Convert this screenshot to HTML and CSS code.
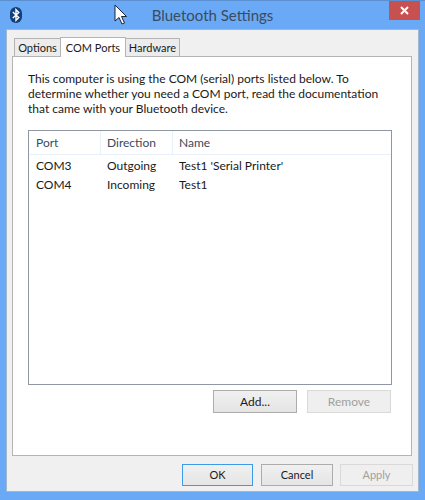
FILE: index.html
```html
<!DOCTYPE html>
<html lang="en">
<head>
  <meta charset="UTF-8">
  <title>Bluetooth Settings</title>
  <link rel="stylesheet" href="styles.css">
</head>
<body>
  <div class="window">
    <div class="titlebar">
      <svg class="bt-icon" width="12" height="16" viewBox="0 0 12 16">
        <rect x="0" y="0" width="12" height="16" rx="6" fill="#123f78"/>
        <path d="M2.8 5 L8.8 10.6 L6 13.4 V2.6 L8.8 5.4 L2.8 11" fill="none" stroke="#fff" stroke-width="1.4"/>
      </svg>
      <div class="title">Bluetooth Settings</div>
      <div class="close">
        <svg width="9" height="9" viewBox="0 0 9 9">
          <path d="M1 1 L8 8 M8 1 L1 8" stroke="#fff" stroke-width="2"/>
        </svg>
      </div>
    </div>
    <svg class="cursor" width="14" height="22" viewBox="0 0 14 22">
      <path d="M1 1 V17 L5 13.5 L8 20 L10.5 19 L7.5 12.5 H12.5 Z" fill="#fff" stroke="#1b2438" stroke-width="1"/>
    </svg>
    <div class="dialog">
      <div class="tabs">
        <div class="tab tab-options">Options</div>
        <div class="tab tab-ports active">COM Ports</div>
        <div class="tab tab-hardware">Hardware</div>
      </div>
      <div class="panel">
        <p class="intro">This computer is using the COM (serial) ports listed below. To determine whether you need a COM port, read the documentation that came with your Bluetooth device.</p>
        <div class="list">
          <div class="row head">
            <div class="col-port">Port</div>
            <div class="col-dir">Direction</div>
            <div class="col-name">Name</div>
          </div>
          <div class="row">
            <div class="col-port">COM3</div>
            <div class="col-dir">Outgoing</div>
            <div class="col-name">Test1 'Serial Printer'</div>
          </div>
          <div class="row">
            <div class="col-port">COM4</div>
            <div class="col-dir">Incoming</div>
            <div class="col-name">Test1</div>
          </div>
        </div>
        <div class="list-buttons">
          <div class="btn wide">Add...</div>
          <div class="btn wide disabled">Remove</div>
        </div>
      </div>
      <div class="dialog-buttons">
        <div class="btn ok">OK</div>
        <div class="btn cancel">Cancel</div>
        <div class="btn apply disabled">Apply</div>
      </div>
    </div>
  </div>
</body>
</html>
```

FILE: styles.css
```css
html, body {
  margin: 0;
  padding: 0;
}
body {
  width: 425px;
  height: 500px;
  overflow: hidden;
  font-family: Lato, "Open Sans", sans-serif;
  font-size: 12px;
  color: #1a1a1a;
}
.window {
  position: relative;
  width: 425px;
  height: 500px;
  box-sizing: border-box;
  background-color: #6aa9f5;
  border-top: 1px solid #5b8fd0;
  padding: 0 6px;
}
.titlebar {
  height: 28px;
  display: flex;
  align-items: center;
  position: relative;
}
.bt-icon {
  margin-left: 4px;
  margin-top: -1px;
}
.title {
  position: absolute;
  left: 0;
  right: 0;
  top: 3px;
  text-align: center;
  font-size: 15px;
  line-height: 22px;
  color: #3a4b60;
}
.close {
  position: absolute;
  top: 0;
  right: -1px;
  width: 31px;
  height: 19px;
  background-color: #c75050;
  display: flex;
  align-items: center;
  justify-content: center;
}
.cursor {
  position: absolute;
  left: 114px;
  top: 3px;
}
.dialog {
  width: 413px;
  height: 463px;
  box-sizing: border-box;
  background-color: #f0f0f0;
  border: 1px solid #a3b6cc;
  padding: 6px 0 0 5px;
}
.tabs {
  display: flex;
  align-items: flex-end;
  height: 20px;
  padding-left: 2px;
  position: relative;
  z-index: 1;
  font-size: 11px;
}
.tab {
  box-sizing: border-box;
  height: 18px;
  line-height: 18px;
  text-align: center;
  background-color: #ececec;
  border: 1px solid #b4b4b4;
  border-bottom: none;
  margin-right: -1px;
}
.tab-options {
  width: 47px;
}
.tab-ports {
  width: 66px;
}
.tab-hardware {
  width: 55px;
}
.tab.active {
  height: 20px;
  line-height: 19px;
  background-color: #fff;
  position: relative;
  z-index: 2;
  margin-bottom: -1px;
}
.panel {
  width: 400px;
  height: 400px;
  box-sizing: border-box;
  background-color: #fff;
  border: 1px solid #b4b4b4;
  padding: 14px 19px 0 15px;
}
.intro {
  margin: 0 0 14px 0;
  line-height: 15px;
  width: 360px;
}
.list {
  height: 255px;
  box-sizing: border-box;
  border: 1px solid #8f97a3;
}
.row {
  display: flex;
  height: 19px;
  line-height: 19px;
}
.row.head {
  height: 24px;
  line-height: 23px;
  margin-bottom: 1px;
  border-bottom: 1px solid #e8f0fa;
  box-sizing: border-box;
  color: #3b4a5c;
}
.col-port {
  width: 72px;
  padding-left: 7px;
  box-sizing: border-box;
}
.col-dir {
  width: 72px;
  padding-left: 6px;
  box-sizing: border-box;
}
.col-name {
  padding-left: 6px;
}
.row.head .col-port,
.row.head .col-dir {
  border-right: 1px solid #e8f0fa;
}
.list-buttons {
  display: flex;
  justify-content: flex-end;
  gap: 10px;
  margin-top: 5px;
  margin-right: 1px;
}
.btn {
  height: 23px;
  line-height: 22px;
  box-sizing: border-box;
  text-align: center;
  background: linear-gradient(#f0f0f0, #e5e5e5);
  border: 1px solid #acacac;
}
.btn.wide {
  width: 84px;
}
.btn.disabled {
  background: #efefef;
  border-color: #d9d9d9;
  color: #a0a0a0;
}
.dialog-buttons {
  display: flex;
  margin-top: 8px;
  padding-left: 170px;
  font-size: 11px;
}
.dialog-buttons .btn {
  height: 22px;
  line-height: 20px;
}
.btn.ok {
  width: 71px;
  border-color: #3c9ae8;
  margin-right: 8px;
}
.btn.cancel {
  width: 72px;
  margin-right: 7px;
}
.btn.apply {
  width: 73px;
}
```
